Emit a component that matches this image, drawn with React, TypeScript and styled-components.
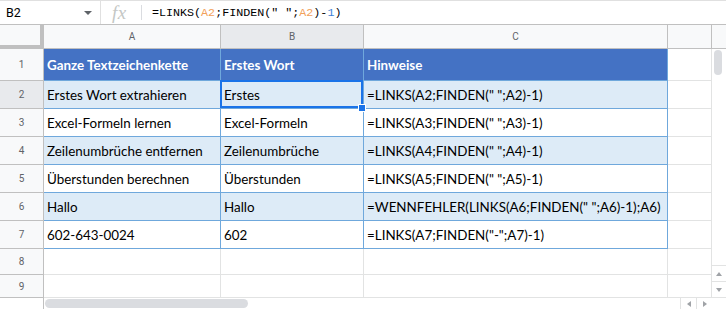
import React from "react";
import styled, { createGlobalStyle } from "styled-components";

const GlobalStyle = createGlobalStyle`
  html, body {
    margin: 0;
    padding: 0;
    background: #fff;
  }
  body {
    width: 726px;
    height: 309px;
    overflow: hidden;
    font-family: Roboto, "Liberation Sans", Arial, sans-serif;
  }
`;

type Band = "head" | "shade" | "plain";

const tableRows: { band: Band; cells: string[] }[] = [
  { band: "head", cells: ["Ganze Textzeichenkette", "Erstes Wort", "Hinweise"] },
  { band: "shade", cells: ["Erstes Wort extrahieren", "Erstes", '=LINKS(A2;FINDEN(" ";A2)-1)'] },
  { band: "plain", cells: ["Excel-Formeln lernen", "Excel-Formeln", '=LINKS(A3;FINDEN(" ";A3)-1)'] },
  { band: "shade", cells: ["Zeilenumbrüche entfernen", "Zeilenumbrüche", '=LINKS(A4;FINDEN(" ";A4)-1)'] },
  { band: "plain", cells: ["Überstunden berechnen", "Überstunden", '=LINKS(A5;FINDEN(" ";A5)-1)'] },
  { band: "shade", cells: ["Hallo", "Hallo", '=WENNFEHLER(LINKS(A6;FINDEN(" ";A6)-1);A6)'] },
  { band: "plain", cells: ["602-643-0024", "602", '=LINKS(A7;FINDEN("-";A7)-1)'] },
];

const columns = ["A", "B", "C"];

const bandBg: Record<Band, string> = {
  head: "#4472c4",
  shade: "#ddebf7",
  plain: "#ffffff",
};

const FormulaBar = styled.div`
  display: flex;
  align-items: center;
  height: 25px;
  box-sizing: border-box;
  border-top: 1px solid #e0e0e0;
  border-bottom: 1px solid #c0c0c0;
`;

const NameBox = styled.div`
  display: flex;
  align-items: center;
  justify-content: space-between;
  width: 101px;
  height: 100%;
  box-sizing: border-box;
  padding: 0 8px 0 6px;
  border-right: 1px solid #e0e0e0;
  font-size: 12.5px;
  color: #000;
`;

const Caret = styled.span`
  width: 0;
  height: 0;
  border-left: 4px solid transparent;
  border-right: 4px solid transparent;
  border-top: 4px solid #5f6368;
`;

const FxLabel = styled.span`
  width: 41px;
  box-sizing: border-box;
  padding-left: 11px;
  font-family: "Liberation Serif", "DejaVu Serif", serif;
  font-style: italic;
  font-size: 19px;
  color: #c4c7c5;
  letter-spacing: 0.5px;
  border-right: 1px solid #dadce0;
  line-height: 15px;
`;

const Formula = styled.span`
  padding-left: 10px;
  font-family: "Liberation Mono", "DejaVu Sans Mono", monospace;
  font-size: 11.7px;
  color: #000;
  white-space: pre;
`;

const Ref = styled.span`
  color: #f2a15a;
`;

const Num = styled.span`
  color: #3d7fd6;
`;

const Sheet = styled.div`
  display: grid;
  grid-template-columns: 44px 177px 143px 304px 44px 14px;
  grid-template-rows: 24px 32px repeat(6, 28px) 26px 23px 11px;
`;

const Corner = styled.div`
  background: #f8f9fa;
  box-sizing: border-box;
  border-right: 4px solid #c0c0c0;
  border-bottom: 4px solid #c0c0c0;
`;

const HeadCell = styled.div<{ $active?: boolean }>`
  display: flex;
  align-items: center;
  justify-content: center;
  box-sizing: border-box;
  background: ${({ $active }) => ($active ? "#e8eaed" : "#f8f9fa")};
  border-right: 1px solid #c0c0c0;
  border-bottom: 1px solid #c0c0c0;
  font-size: 10px;
  color: #5f6368;
`;

const Cell = styled.div<{ $band?: Band; $line?: string }>`
  position: relative;
  display: flex;
  align-items: center;
  box-sizing: border-box;
  padding: 0 3px;
  overflow: hidden;
  white-space: nowrap;
  background: ${({ $band }) => bandBg[$band ?? "plain"]};
  border-right: 1px solid ${({ $line }) => $line ?? "#e2e3e3"};
  border-bottom: 1px solid ${({ $line }) => $line ?? "#e2e3e3"};
  font-family: Lato, "Open Sans", sans-serif;
  font-size: 13.4px;
  font-weight: ${({ $band }) => ($band === "head" ? 700 : 400)};
  color: ${({ $band }) => ($band === "head" ? "#ffffff" : "#000000")};
`;

const SelectedCell = styled(Cell)`
  overflow: visible;
`;

const Selection = styled.div`
  position: absolute;
  top: -1px;
  left: -1px;
  right: 0;
  bottom: 0;
  border: 2px solid #1a73e8;
  pointer-events: none;
`;

const Handle = styled.div`
  position: absolute;
  right: -3px;
  bottom: -4px;
  width: 6px;
  height: 6px;
  background: #1a73e8;
  border: 1px solid #fff;
  z-index: 2;
`;

const VTrack = styled.div`
  grid-column: 6;
  grid-row: 2 / 11;
  display: flex;
  flex-direction: column;
  box-sizing: border-box;
  border-bottom: 1px solid #e2e3e3;
`;

const VThumb = styled.div`
  width: 8px;
  height: 25px;
  margin: 1px 0 0 2px;
  border-radius: 4px;
  background: #dadce0;
`;

const VButtons = styled.div`
  display: flex;
  flex-direction: column;
  margin-top: auto;
`;

const ArrowButton = styled.div`
  display: flex;
  align-items: center;
  justify-content: center;
  box-sizing: border-box;
`;

const VButton = styled(ArrowButton)`
  height: 16px;
  border-top: 1px solid #e2e3e3;
`;

const HButton = styled(ArrowButton)`
  width: 16px;
  height: 100%;
  border-left: 1px solid #e2e3e3;
`;

const Tri = styled.span<{ $dir: "up" | "down" | "left" | "right" }>`
  width: 0;
  height: 0;
  border: 3.5px solid transparent;
  ${({ $dir }) =>
    $dir === "up"
      ? "border-bottom: 4px solid #a0a3a7; border-top: none;"
      : $dir === "down"
      ? "border-top: 4px solid #a0a3a7; border-bottom: none;"
      : $dir === "left"
      ? "border-right: 4px solid #a0a3a7; border-left: none;"
      : "border-left: 4px solid #a0a3a7; border-right: none;"}
`;

const HScroll = styled.div`
  grid-column: 1 / 6;
  grid-row: 11;
  display: flex;
  align-items: center;
`;

const HGutter = styled.div`
  width: 44px;
  height: 100%;
  box-sizing: border-box;
  border-right: 1px solid #c0c0c0;
`;

const HThumb = styled.div`
  width: 203px;
  height: 9px;
  margin-left: 1px;
  border-radius: 5px;
  background: #dadce0;
`;

const HButtons = styled.div`
  display: flex;
  height: 100%;
  margin-left: auto;
`;

const ScrollHead = styled(HeadCell)`
  border-right: none;
`;

function FormulaText() {
  return (
    <Formula>
      =LINKS(<Ref>A2</Ref>;FINDEN(" ";<Ref>A2</Ref>)-<Num>1</Num>)
    </Formula>
  );
}

export default function App() {
  return (
    <>
      <GlobalStyle />
      <FormulaBar>
        <NameBox>
          B2
          <Caret />
        </NameBox>
        <FxLabel>fx</FxLabel>
        <FormulaText />
      </FormulaBar>
      <Sheet>
        <Corner />
        {columns.map((c) => (
          <HeadCell key={c} $active={c === "B"}>
            {c}
          </HeadCell>
        ))}
        <HeadCell />
        <ScrollHead />

        {tableRows.map((row, i) => (
          <React.Fragment key={i}>
            <HeadCell $active={i === 1}>{i + 1}</HeadCell>
            {row.cells.map((text, j) =>
              i === 1 && j === 1 ? (
                <SelectedCell key={j} $band={row.band} $line="#6fa8dc">
                  {text}
                  <Selection />
                  <Handle />
                </SelectedCell>
              ) : (
                <Cell key={j} $band={row.band} $line="#6fa8dc">
                  {text}
                </Cell>
              )
            )}
            <Cell />
          </React.Fragment>
        ))}

        {[8, 9].map((n) => (
          <React.Fragment key={n}>
            <HeadCell>{n}</HeadCell>
            <Cell />
            <Cell />
            <Cell />
            <Cell />
          </React.Fragment>
        ))}

        <VTrack>
          <VThumb />
          <VButtons>
            <VButton>
              <Tri $dir="up" />
            </VButton>
            <VButton>
              <Tri $dir="down" />
            </VButton>
          </VButtons>
        </VTrack>

        <HScroll>
          <HGutter />
          <HThumb />
          <HButtons>
            <HButton>
              <Tri $dir="left" />
            </HButton>
            <HButton>
              <Tri $dir="right" />
            </HButton>
          </HButtons>
        </HScroll>
      </Sheet>
    </>
  );
}
